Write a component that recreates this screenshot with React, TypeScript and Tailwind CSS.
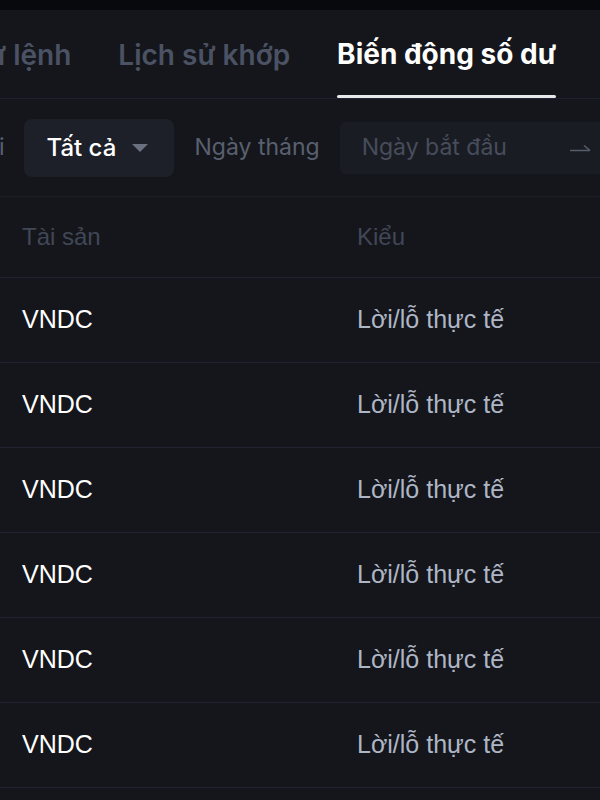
import React from "react";

const rows = Array.from({ length: 6 });

export default function App() {
  return (
    <div className="w-[600px] h-[800px] overflow-hidden bg-[#14161b] flex flex-col" style={{ fontFamily: "Inter, 'Noto Sans', sans-serif" }}>
      <div className="h-[10px] bg-[#08090c] shrink-0" />
      {/* Tabs */}
      <div className="h-[89px] border-b border-[#1c2230] flex items-end shrink-0">
        <div className="flex items-end gap-[47px] -ml-[91px] whitespace-nowrap">
          <div className="h-[88px] flex items-center text-[28px] font-semibold text-[#4b5263] pt-[2px]">Lịch sử lệnh</div>
          <div className="h-[88px] flex items-center text-[28px] font-semibold text-[#4b5263] pt-[2px]">Lịch sử khớp</div>
          <div className="h-[88px] flex flex-col justify-between text-[28px] font-bold text-white">
            <div className="flex-1 flex items-center pt-[2px]">Biến động số dư</div>
            <div className="h-[3px] bg-[#e6e8ec] rounded-full" />
          </div>
        </div>
      </div>
      {/* Filter */}
      <div className="h-[98px] border-b border-[#1a1e27] flex items-center shrink-0 whitespace-nowrap">
        <div className="flex items-center -ml-[41px]">
          <span className="text-[23px] text-[#5a6070]">Loại</span>
          <div className="ml-[19px] w-[150px] h-[58px] rounded-[8px] bg-[#1d2028] flex items-center pl-[23px] gap-[15px]">
            <span className="text-[24px] font-medium text-white">Tất cả</span>
            <svg width="18" height="10" viewBox="0 0 18 10"><path d="M1 1h16l-8 8z" fill="#6b7180" /></svg>
          </div>
          <span className="ml-[21px] text-[23px] text-[#5a6070]">Ngày tháng</span>
          <div className="ml-[20px] w-[300px] h-[52px] rounded-[6px] bg-[#191c23] flex items-center pl-[22px]">
            <span className="text-[23px] text-[#474d5b]">Ngày bắt đầu</span>
            <svg className="ml-[62px]" width="22" height="10" viewBox="0 0 22 10"><path d="M1 7.5h20M21 7.5l-6-5" stroke="#565c6a" strokeWidth="1.6" fill="none" /></svg>
          </div>
        </div>
      </div>
      {/* Header */}
      <div className="h-[81px] border-b border-[#1f2430] flex items-center shrink-0 text-[24px] text-[#414756]" style={{ fontFamily: "'Liberation Sans', Arial, sans-serif" }}>
        <div className="w-[357px] pl-[22px]">Tài sản</div>
        <div>Kiểu</div>
      </div>
      {rows.map((_, i) => (
        <div key={i} className="h-[85px] border-b border-[#1f2430] flex items-center shrink-0 text-[25px]" style={{ fontFamily: "'Liberation Sans', Arial, sans-serif" }}>
          <div className="w-[357px] pl-[22px] text-white">VNDC</div>
          <div className="text-[#aeb6c6]">Lời/lỗ thực tế</div>
        </div>
      ))}
    </div>
  );
}
